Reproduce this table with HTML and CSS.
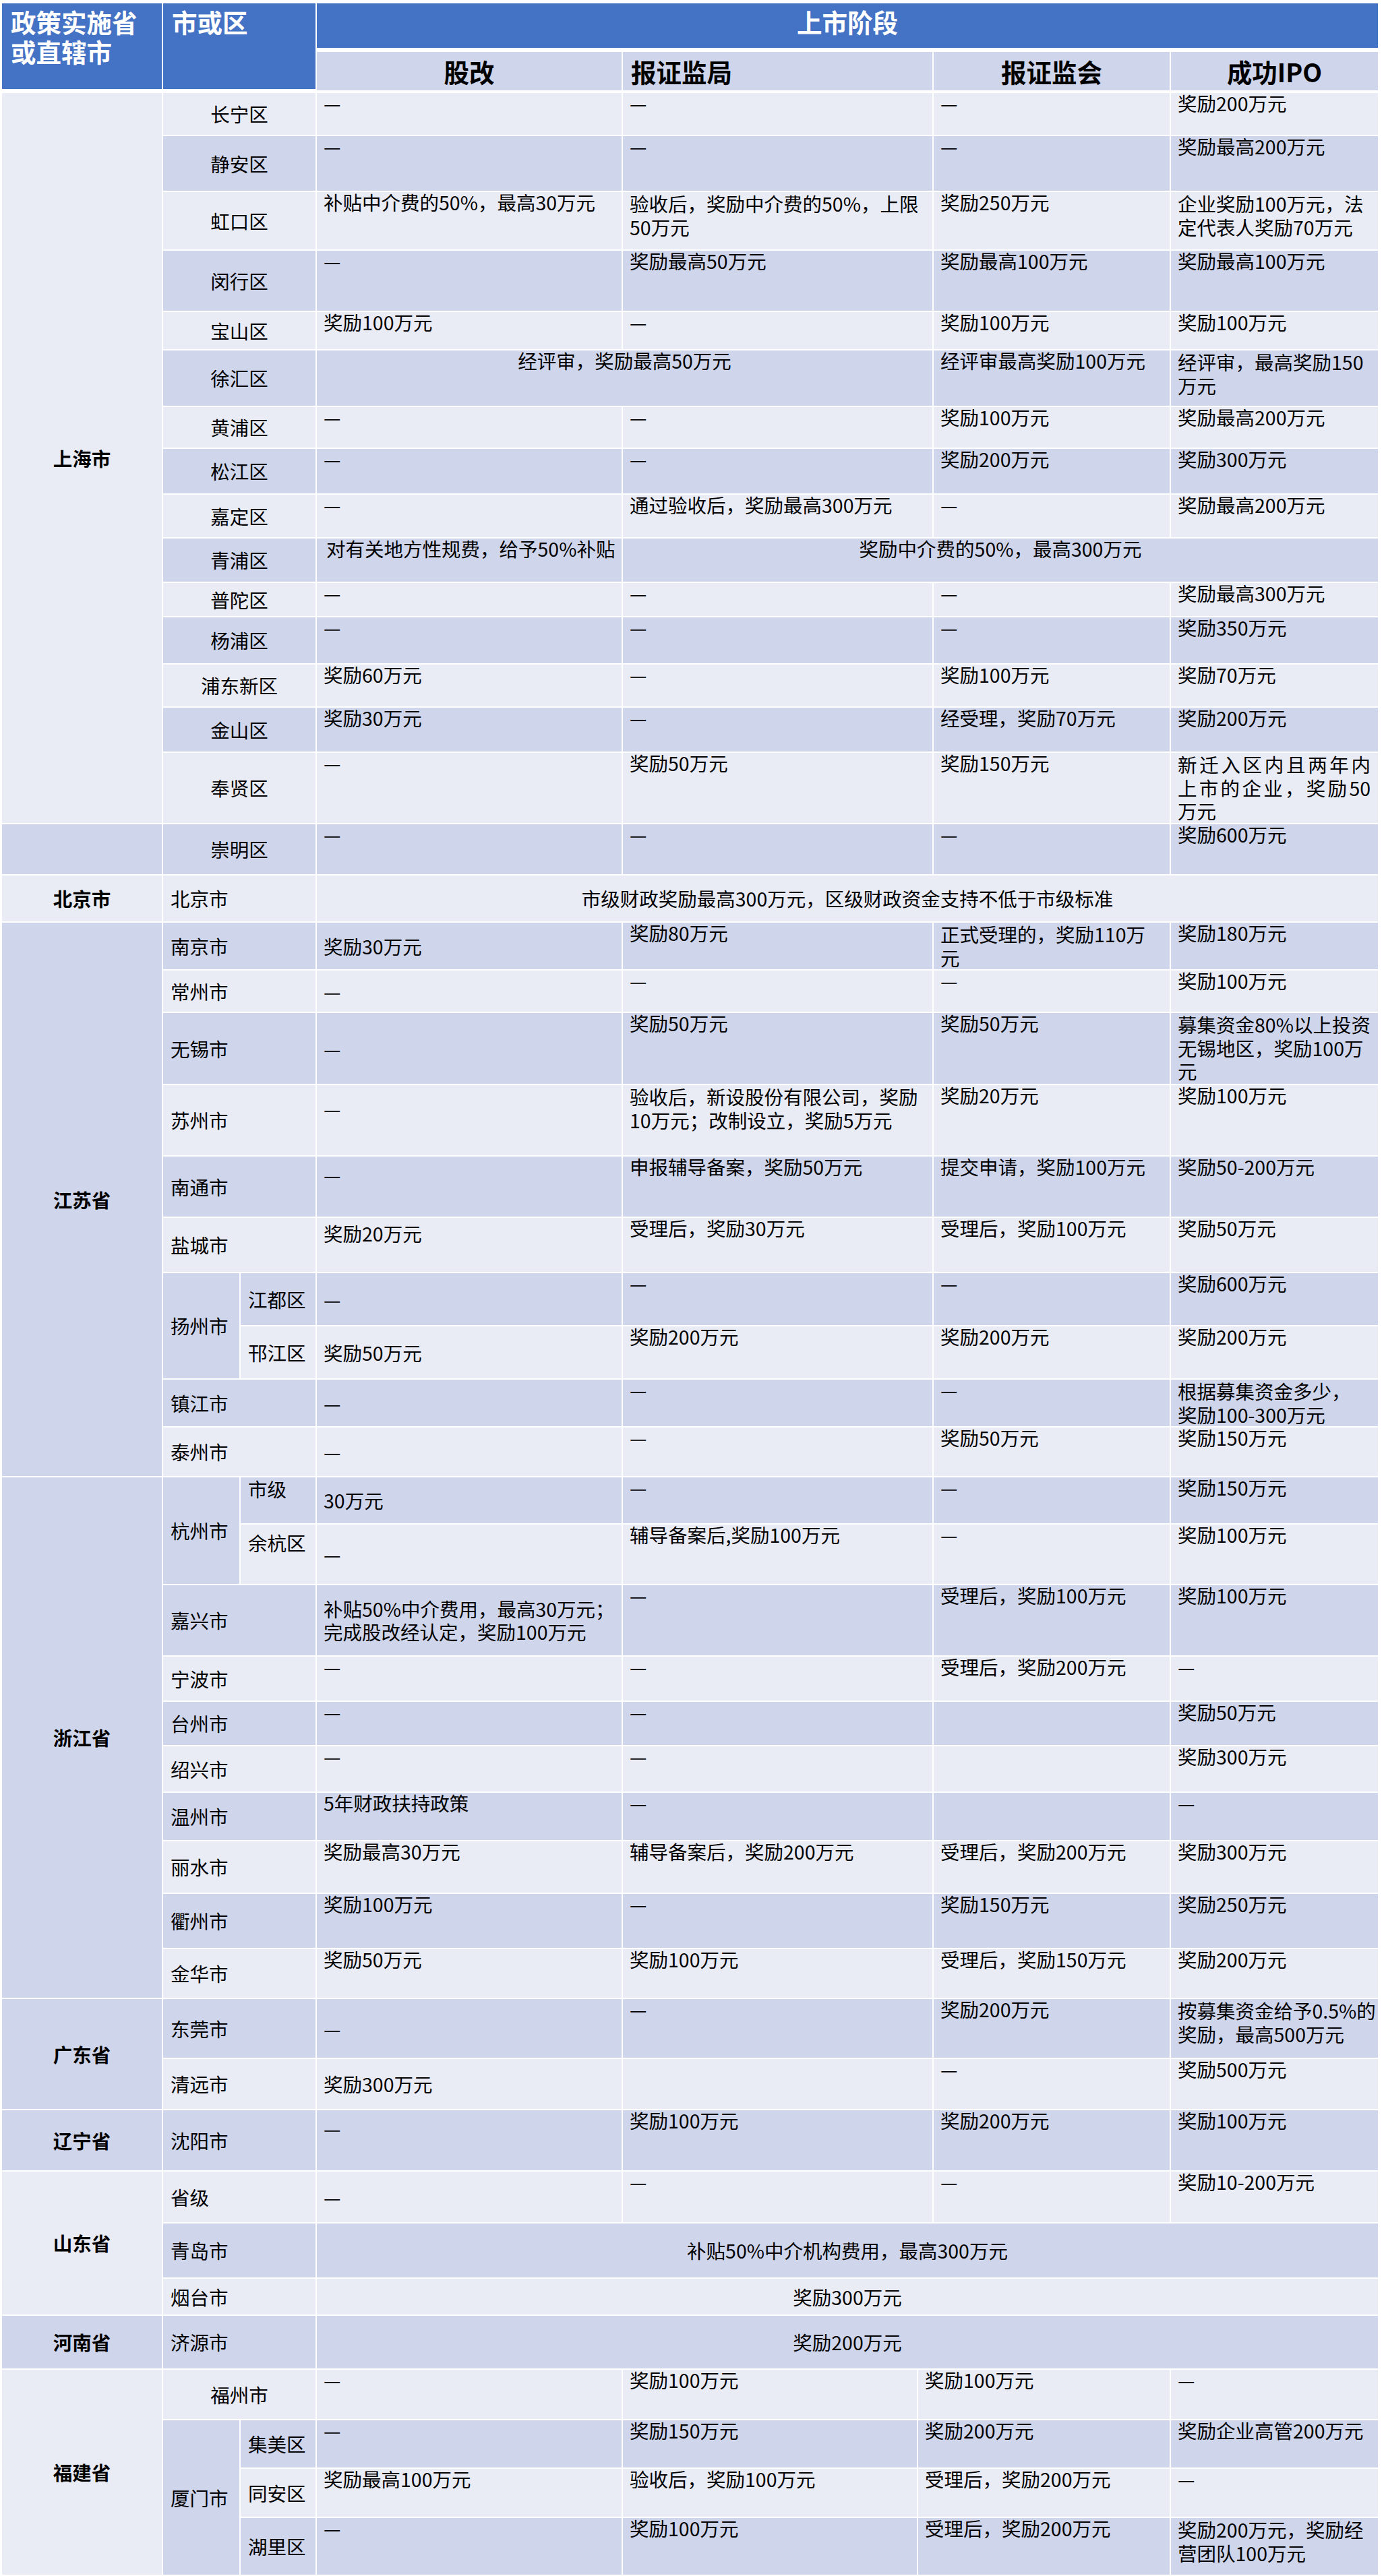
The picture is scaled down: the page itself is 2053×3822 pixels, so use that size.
FILE: index.html
```html
<!DOCTYPE html>
<html lang="zh-CN">
<head>
<meta charset="utf-8">
<title>各地上市奖励政策</title>
<link rel="stylesheet" href="styles.css">
</head>
<body>
<table class="policy">
<colgroup>
<col class="k1"><col class="k2"><col class="k3"><col class="k4"><col class="k5"><col class="k6"><col class="k7"><col class="k8">
</colgroup>
<thead>
<tr class="hr1">
<th class="hd" rowspan="2">政策实施省<br>或直辖市</th>
<th class="hd" rowspan="2" colspan="2">市或区</th>
<th class="hd stage" colspan="5">上市阶段</th>
</tr>
<tr class="hr2">
<th class="sub">股改</th>
<th class="sub left" colspan="2">报证监局</th>
<th class="sub">报证监会</th>
<th class="sub">成功IPO</th>
</tr>
</thead>
<tbody>
<tr class="l h62">
<td class="prov" rowspan="15">上海市</td>
<td class="city cc" colspan="2">长宁区</td>
<td>—</td><td colspan="2">—</td><td>—</td><td>奖励200万元</td>
</tr>
<tr class="d h81">
<td class="city cc" colspan="2">静安区</td>
<td>—</td><td colspan="2">—</td><td>—</td><td>奖励最高200万元</td>
</tr>
<tr class="l h85">
<td class="city cc" colspan="2">虹口区</td>
<td>补贴中介费的50%，最高30万元</td><td class="ml" colspan="2">验收后，奖励中介费的50%，上限<br>50万元</td><td>奖励250万元</td><td class="ml">企业奖励100万元，法<br>定代表人奖励70万元</td>
</tr>
<tr class="d h89">
<td class="city cc" colspan="2">闵行区</td>
<td>—</td><td colspan="2">奖励最高50万元</td><td>奖励最高100万元</td><td>奖励最高100万元</td>
</tr>
<tr class="l h55">
<td class="city cc" colspan="2">宝山区</td>
<td>奖励100万元</td><td colspan="2">—</td><td>奖励100万元</td><td>奖励100万元</td>
</tr>
<tr class="d h82">
<td class="city cc" colspan="2">徐汇区</td>
<td class="ctr" colspan="3">经评审，奖励最高50万元</td><td>经评审最高奖励100万元</td><td class="ml">经评审，最高奖励150<br>万元</td>
</tr>
<tr class="l h60">
<td class="city cc" colspan="2">黄浦区</td>
<td>—</td><td colspan="2">—</td><td>奖励100万元</td><td>奖励最高200万元</td>
</tr>
<tr class="d h66">
<td class="city cc" colspan="2">松江区</td>
<td>—</td><td colspan="2">—</td><td>奖励200万元</td><td>奖励300万元</td>
</tr>
<tr class="l h63">
<td class="city cc" colspan="2">嘉定区</td>
<td>—</td><td colspan="2">通过验收后，奖励最高300万元</td><td>—</td><td>奖励最高200万元</td>
</tr>
<tr class="d h64">
<td class="city cc" colspan="2">青浦区</td>
<td class="ind">对有关地方性规费，给予50%补贴</td><td class="ctr" colspan="4">奖励中介费的50%，最高300万元</td>
</tr>
<tr class="l h49">
<td class="city cc" colspan="2">普陀区</td>
<td>—</td><td colspan="2">—</td><td>—</td><td>奖励最高300万元</td>
</tr>
<tr class="d h68">
<td class="city cc" colspan="2">杨浦区</td>
<td>—</td><td colspan="2">—</td><td>—</td><td>奖励350万元</td>
</tr>
<tr class="l h62">
<td class="city cc" colspan="2">浦东新区</td>
<td>奖励60万元</td><td colspan="2">—</td><td>奖励100万元</td><td>奖励70万元</td>
</tr>
<tr class="d h65">
<td class="city cc" colspan="2">金山区</td>
<td>奖励30万元</td><td colspan="2">—</td><td>经受理，奖励70万元</td><td>奖励200万元</td>
</tr>
<tr class="l h104">
<td class="city cc" colspan="2">奉贤区</td>
<td>—</td><td colspan="2">奖励50万元</td><td>奖励150万元</td><td class="ml just"><span class="jl">新迁入区内且两年内</span><span class="jl">上市的企业，奖励50</span>万元</td>
</tr>
<tr class="d h74">
<td class="prov"></td>
<td class="city cc" colspan="2">崇明区</td>
<td>—</td><td colspan="2">—</td><td>—</td><td>奖励600万元</td>
</tr>
<tr class="l h68">
<td class="prov">北京市</td>
<td class="city" colspan="2">北京市</td>
<td class="ctr mid" colspan="5">市级财政奖励最高300万元，区级财政资金支持不低于市级标准</td>
</tr>
<tr class="d h68">
<td class="prov" rowspan="10">江苏省</td>
<td class="city" colspan="2">南京市</td>
<td class="mid">奖励30万元</td><td colspan="2">奖励80万元</td><td class="ml">正式受理的，奖励110万<br>元</td><td>奖励180万元</td>
</tr>
<tr class="l h61">
<td class="city" colspan="2">常州市</td>
<td class="mid">—</td><td colspan="2">—</td><td>—</td><td>奖励100万元</td>
</tr>
<tr class="d h105">
<td class="city" colspan="2">无锡市</td>
<td class="mid">—</td><td colspan="2">奖励50万元</td><td>奖励50万元</td><td class="ml">募集资金80%以上投资<br>无锡地区，奖励100万<br>元</td>
</tr>
<tr class="l h104">
<td class="city" colspan="2">苏州市</td>
<td class="mid2">—</td><td class="ml" colspan="2">验收后，新设股份有限公司，奖励<br>10万元；改制设立，奖励5万元</td><td>奖励20万元</td><td>奖励100万元</td>
</tr>
<tr class="d h89">
<td class="city" colspan="2">南通市</td>
<td class="mid2">—</td><td colspan="2">申报辅导备案，奖励50万元</td><td>提交申请，奖励100万元</td><td>奖励50-200万元</td>
</tr>
<tr class="l h80">
<td class="city" colspan="2">盐城市</td>
<td class="mid2">奖励20万元</td><td colspan="2">受理后，奖励30万元</td><td>受理后，奖励100万元</td><td>奖励50万元</td>
</tr>
<tr class="d h77">
<td class="city" rowspan="2">扬州市</td>
<td class="city">江都区</td>
<td class="mid">—</td><td colspan="2">—</td><td>—</td><td>奖励600万元</td>
</tr>
<tr class="l h77">
<td class="city">邗江区</td>
<td class="mid">奖励50万元</td><td colspan="2">奖励200万元</td><td>奖励200万元</td><td>奖励200万元</td>
</tr>
<tr class="d h68">
<td class="city" colspan="2">镇江市</td>
<td class="mid">—</td><td colspan="2">—</td><td>—</td><td class="ml">根据募集资金多少，<br>奖励100-300万元</td>
</tr>
<tr class="l h72">
<td class="city" colspan="2">泰州市</td>
<td class="mid">—</td><td colspan="2">—</td><td>奖励50万元</td><td>奖励150万元</td>
</tr>
<tr class="d h68">
<td class="prov" rowspan="10">浙江省</td>
<td class="city" rowspan="2">杭州市</td>
<td class="city mid2">市级</td>
<td class="mid">30万元</td><td colspan="2">—</td><td>—</td><td>奖励150万元</td>
</tr>
<tr class="l h88">
<td class="city mid2">余杭区</td>
<td class="mid">—</td><td colspan="2">辅导备案后,奖励100万元</td><td>—</td><td>奖励100万元</td>
</tr>
<tr class="d h104">
<td class="city" colspan="2">嘉兴市</td>
<td class="mid ml">补贴50%中介费用，最高30万元；<br>完成股改经认定，奖励100万元</td><td colspan="2">—</td><td>受理后，奖励100万元</td><td>奖励100万元</td>
</tr>
<tr class="l h65">
<td class="city" colspan="2">宁波市</td>
<td>—</td><td colspan="2">—</td><td>受理后，奖励200万元</td><td>—</td>
</tr>
<tr class="d h64">
<td class="city" colspan="2">台州市</td>
<td>—</td><td colspan="2">—</td><td></td><td>奖励50万元</td>
</tr>
<tr class="l h67">
<td class="city" colspan="2">绍兴市</td>
<td>—</td><td colspan="2">—</td><td></td><td>奖励300万元</td>
</tr>
<tr class="d h70">
<td class="city" colspan="2">温州市</td>
<td>5年财政扶持政策</td><td colspan="2">—</td><td></td><td>—</td>
</tr>
<tr class="l h76">
<td class="city" colspan="2">丽水市</td>
<td>奖励最高30万元</td><td colspan="2">辅导备案后，奖励200万元</td><td>受理后，奖励200万元</td><td>奖励300万元</td>
</tr>
<tr class="d h80">
<td class="city" colspan="2">衢州市</td>
<td>奖励100万元</td><td colspan="2">—</td><td>奖励150万元</td><td>奖励250万元</td>
</tr>
<tr class="l h72">
<td class="city" colspan="2">金华市</td>
<td>奖励50万元</td><td colspan="2">奖励100万元</td><td>受理后，奖励150万元</td><td>奖励200万元</td>
</tr>
<tr class="d h87">
<td class="prov" rowspan="2">广东省</td>
<td class="city" colspan="2">东莞市</td>
<td class="mid">—</td><td colspan="2">—</td><td>奖励200万元</td><td class="ml">按募集资金给予0.5%的<br>奖励，最高500万元</td>
</tr>
<tr class="l h74">
<td class="city" colspan="2">清远市</td>
<td class="mid">奖励300万元</td><td colspan="2"></td><td>—</td><td>奖励500万元</td>
</tr>
<tr class="d h89">
<td class="prov">辽宁省</td>
<td class="city" colspan="2">沈阳市</td>
<td class="mid2">—</td><td colspan="2">奖励100万元</td><td>奖励200万元</td><td>奖励100万元</td>
</tr>
<tr class="l h75">
<td class="prov" rowspan="3">山东省</td>
<td class="city" colspan="2">省级</td>
<td class="mid">—</td><td colspan="2">—</td><td>—</td><td>奖励10-200万元</td>
</tr>
<tr class="d h80">
<td class="city" colspan="2">青岛市</td>
<td class="ctr mid" colspan="5">补贴50%中介机构费用，最高300万元</td>
</tr>
<tr class="l h53">
<td class="city" colspan="2">烟台市</td>
<td class="ctr mid" colspan="5">奖励300万元</td>
</tr>
<tr class="d h78">
<td class="prov">河南省</td>
<td class="city" colspan="2">济源市</td>
<td class="ctr mid" colspan="5">奖励200万元</td>
</tr>
<tr class="l h73">
<td class="prov" rowspan="4">福建省</td>
<td class="city cc" colspan="2">福州市</td>
<td>—</td><td>奖励100万元</td><td colspan="2">奖励100万元</td><td>—</td>
</tr>
<tr class="d h70">
<td class="city" rowspan="3">厦门市</td>
<td class="city">集美区</td>
<td>—</td><td>奖励150万元</td><td colspan="2">奖励200万元</td><td>奖励企业高管200万元</td>
</tr>
<tr class="l h71">
<td class="city">同安区</td>
<td>奖励最高100万元</td><td>验收后，奖励100万元</td><td colspan="2">受理后，奖励200万元</td><td>—</td>
</tr>
<tr class="d h84">
<td class="city">湖里区</td>
<td>—</td><td>奖励100万元</td><td colspan="2">受理后，奖励200万元</td><td class="ml">奖励200万元，奖励经<br>营团队100万元</td>
</tr>
</tbody>
</table>
</body>
</html>
```

FILE: styles.css
```css
* { box-sizing: border-box; }

html, body {
  margin: 0;
  padding: 0;
  background: #ffffff;
}

body {
  font-family: "Noto Sans CJK SC", "Noto Sans", sans-serif;
  color: #000000;
}

.policy {
  table-layout: fixed;
  border-collapse: separate;
  border-spacing: 2px;
  width: 2045px;
  margin: 3px 0 0 1px;
  font-size: 28.5px;
  line-height: 30px;
}

.k1 { width: 237px; }
.k2 { width: 113px; }
.k3 { width: 111px; }
.k4 { width: 452px; }
.k5 { width: 436px; }
.k6 { width: 21px; }
.k7 { width: 350px; }
.k8 { width: 307px; }

.policy td,
.policy th {
  padding: 0 10px;
  vertical-align: top;
  text-align: left;
  white-space: nowrap;
  font-weight: 400;
}

/* header */
.hr1 { height: 70px; }
.hr2 { height: 59px; }

.policy .hd {
  background: #4472c4;
  color: #ffffff;
  font-weight: 700;
  font-size: 37.5px;
  line-height: 44px;
  padding: 5px 13px 0;
  border-bottom: 4px solid #ffffff;
}

.policy .hd.stage { text-align: center; }

.policy .sub {
  background: #cfd5ea;
  color: #000000;
  font-weight: 700;
  font-size: 37.5px;
  line-height: 44px;
  vertical-align: middle;
  text-align: center;
  border-bottom: 2px solid #ffffff;
}

.policy .sub.left {
  text-align: left;
  padding-left: 12px;
}

/* body rows */
.l > td { background: #e9ebf5; }
.d > td { background: #cfd5ea; }

.policy .prov {
  font-weight: 700;
  text-align: center;
  vertical-align: middle;
}

.policy .city {
  vertical-align: middle;
  padding-left: 11px;
}

.policy .cc {
  text-align: center;
  padding-left: 10px;
}

.policy .mid { vertical-align: middle; }

.policy .mid2 {
  vertical-align: middle;
  padding-bottom: 35px;
}

.policy .ctr { text-align: center; }

.policy .ml { line-height: 34.6px; }

.policy .ind { padding-left: 14px; }

.policy .just { padding-right: 11px; }

.jl {
  display: block;
  white-space: normal;
  text-align: justify;
  text-align-last: justify;
}

/* row heights */
.h49 { height: 49px; }
.h53 { height: 53px; }
.h55 { height: 55px; }
.h60 { height: 60px; }
.h61 { height: 61px; }
.h62 { height: 62px; }
.h63 { height: 63px; }
.h64 { height: 64px; }
.h65 { height: 65px; }
.h66 { height: 66px; }
.h67 { height: 67px; }
.h68 { height: 68px; }
.h70 { height: 70px; }
.h71 { height: 71px; }
.h72 { height: 72px; }
.h73 { height: 73px; }
.h74 { height: 74px; }
.h75 { height: 75px; }
.h76 { height: 76px; }
.h77 { height: 77px; }
.h78 { height: 78px; }
.h80 { height: 80px; }
.h81 { height: 81px; }
.h82 { height: 82px; }
.h84 { height: 84px; }
.h85 { height: 85px; }
.h87 { height: 87px; }
.h88 { height: 88px; }
.h89 { height: 89px; }
.h104 { height: 104px; }
.h105 { height: 105px; }
```
